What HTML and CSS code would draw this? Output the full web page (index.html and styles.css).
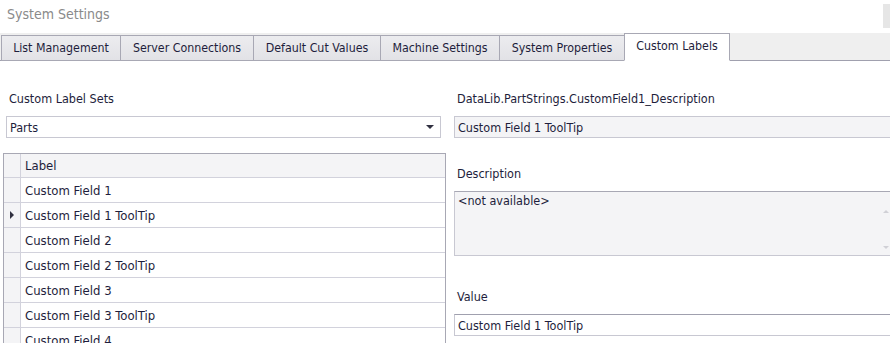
FILE: index.html
```html
<!DOCTYPE html>
<html>
<head>
<meta charset="utf-8">
<link rel="stylesheet" href="styles.css">
</head>
<body>
<div class="window">
  <div class="titlebar">
    <span class="title">System Settings</span>
    <span class="corner"></span>
  </div>
  <div class="tabstrip">
    <div class="tab" style="width:119px">List Management</div>
    <div class="tab" style="width:133px">Server Connections</div>
    <div class="tab" style="width:127px">Default Cut Values</div>
    <div class="tab" style="width:119px">Machine Settings</div>
    <div class="tab" style="width:125px">System Properties</div>
    <div class="tab active" style="width:106px">Custom Labels</div>
  </div>
  <div class="content">
    <div class="left">
      <div class="label">Custom Label Sets</div>
      <div class="combo"><span>Parts</span><span class="arrow"></span></div>
      <div class="grid">
        <div class="row head"><div class="ind"></div><div class="cell">Label</div></div>
        <div class="row"><div class="ind"></div><div class="cell">Custom Field 1</div></div>
        <div class="row"><div class="ind"><span class="tri"></span></div><div class="cell">Custom Field 1 ToolTip</div></div>
        <div class="row"><div class="ind"></div><div class="cell">Custom Field 2</div></div>
        <div class="row"><div class="ind"></div><div class="cell">Custom Field 2 ToolTip</div></div>
        <div class="row"><div class="ind"></div><div class="cell">Custom Field 3</div></div>
        <div class="row"><div class="ind"></div><div class="cell">Custom Field 3 ToolTip</div></div>
        <div class="row"><div class="ind"></div><div class="cell">Custom Field 4</div></div>
      </div>
    </div>
    <div class="right">
      <div class="label">DataLib.PartStrings.CustomField1_Description</div>
      <div class="field ro">Custom Field 1 ToolTip</div>
      <div class="label lbl2">Description</div>
      <div class="memo">
        <span>&lt;not available&gt;</span>
        <span class="scroll"><span class="up"></span><span class="down"></span></span>
      </div>
      <div class="label lbl3">Value</div>
      <div class="field edit">Custom Field 1 ToolTip</div>
    </div>
  </div>
</div>
</body>
</html>
```

FILE: styles.css
```css
* { box-sizing: border-box; }
html, body { margin: 0; padding: 0; background: #ffffff; overflow: hidden; }
body {
  font-family: Tahoma, "DejaVu Sans Condensed", "DejaVu Sans", sans-serif;
  font-size: 12.5px;
  color: #1e1e3c;
}
.window { width: 890px; height: 343px; overflow: hidden; }
.titlebar {
  height: 33px;
  display: flex;
  justify-content: space-between;
  align-items: flex-start;
}
.title {
  font-size: 14px;
  color: #8a8a8a;
  padding: 6px 0 0 7px;
}
.corner {
  width: 7px;
  height: 24px;
  margin-top: 4px;
  background: #e6e6e6;
}
.tabstrip {
  height: 28px;
  background: #efefef;
  border-bottom: 1px solid #a0a0ae;
  display: flex;
  align-items: flex-end;
  padding-left: 1px;
}
.tab {
  height: 26px;
  margin-bottom: -1px;
  border: 1px solid #a8a8b4;
  border-right: none;
  background: linear-gradient(#ececef, #e2e2e6);
  display: flex;
  align-items: center;
  justify-content: center;
  color: #1e1e3c;
  white-space: nowrap;
  font-size: 12.3px;
}
.tab.active {
  height: 28px;
  background: #ffffff;
  border-right: 1px solid #a8a8b4;
  border-bottom: 1px solid #ffffff;
  padding-bottom: 2px;
}
.content {
  display: flex;
  padding-top: 28px;
}
.left { width: 454px; flex: none; padding-left: 3px; }
.right { width: 450px; flex: none; }
.label { height: 20px; line-height: 20px; padding-left: 6px; white-space: nowrap; }
.combo {
  margin: 7px 0 0 3px;
  width: 435px;
  height: 22px;
  border: 1px solid #c8c8d2;
  display: flex;
  align-items: center;
  justify-content: space-between;
  padding: 0 6px 0 3px;
}
.arrow {
  width: 0; height: 0;
  border-left: 4px solid transparent;
  border-right: 4px solid transparent;
  border-top: 4px solid #303040;
}
.grid {
  margin-top: 15px;
  width: 443px;
  border: 1px solid #a8a8b4;
  border-bottom: none;
  font-size: 13px;
}
.row { display: flex; height: 25px; border-bottom: 1px solid #d2d2dc; }
.row .ind {
  width: 17px;
  background: #f4f4f6;
  border-right: 1px solid #d2d2dc;
  display: flex;
  align-items: center;
  justify-content: center;
}
.row .cell { flex: 1; display: flex; align-items: center; padding-left: 4px; white-space: nowrap; }
.row.head { height: 24px; background: #f4f4f6; }
.tri {
  width: 0; height: 0;
  border-top: 4px solid transparent;
  border-bottom: 4px solid transparent;
  border-left: 4px solid #303040;
}
.right .label { padding-left: 3px; }
.field {
  margin-top: 7px;
  width: 444px;
  height: 22px;
  border: 1px solid #c8c8d2;
  display: flex;
  align-items: center;
  padding-left: 3px;
  white-space: nowrap;
}
.field.ro { background: #f4f4f6; }
.field.edit { background: #ffffff; border-top-color: #a0a0ae; }
.lbl2 { margin-top: 26px; }
.lbl3 { margin-top: 31px; }
.memo {
  margin-top: 7px;
  width: 444px;
  height: 65px;
  background: #f4f4f6;
  border: 1px solid #c8c8d2;
  border-top-color: #a8a8b4;
  display: flex;
  justify-content: space-between;
  padding: 1px 0 0 3px;
}
.scroll {
  width: 8px;
  margin-right: 6px;
  display: flex;
  flex-direction: column;
  justify-content: space-between;
  padding: 17px 0 6px 0;
}
.up, .down { width: 0; height: 0; border-left: 3px solid transparent; border-right: 3px solid transparent; }
.up { border-bottom: 3px solid #d0d0d6; }
.down { border-top: 3px solid #d0d0d6; }
```
